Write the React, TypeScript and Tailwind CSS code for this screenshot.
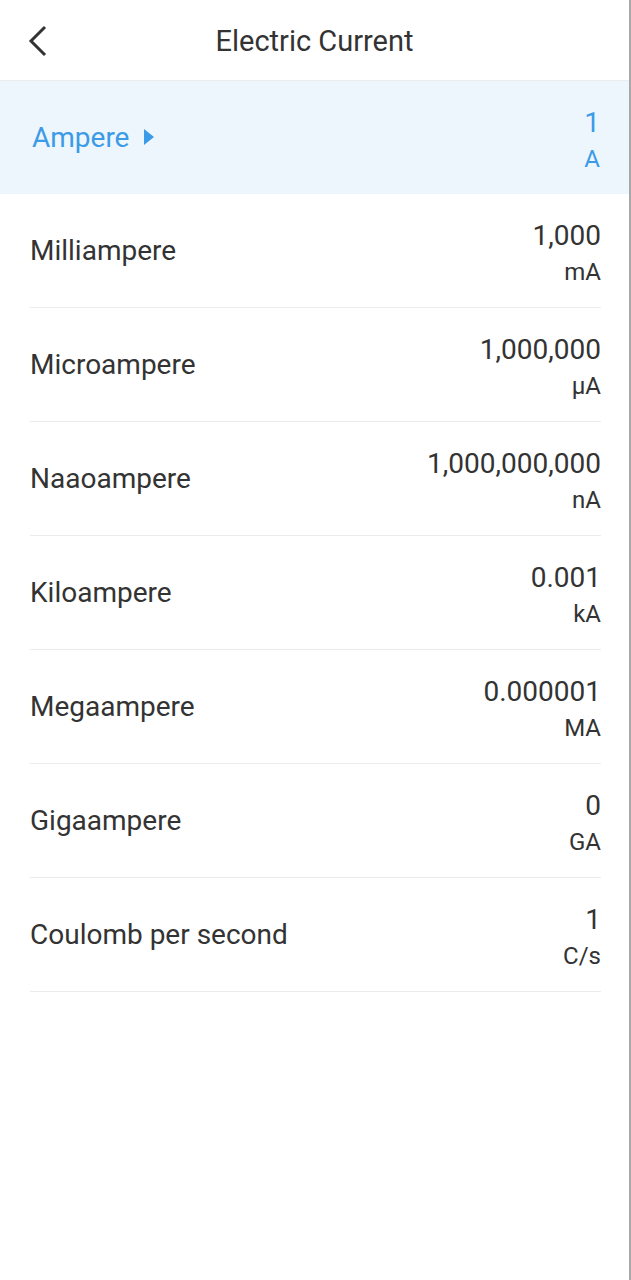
const units = [
  { name: 'Milliampere', value: '1,000', symbol: 'mA' },
  { name: 'Microampere', value: '1,000,000', symbol: 'µA' },
  { name: 'Naaoampere', value: '1,000,000,000', symbol: 'nA' },
  { name: 'Kiloampere', value: '0.001', symbol: 'kA' },
  { name: 'Megaampere', value: '0.000001', symbol: 'MA' },
  { name: 'Gigaampere', value: '0', symbol: 'GA' },
  { name: 'Coulomb per second', value: '1', symbol: 'C/s' },
];

export default function App() {
  return (
    <div
      className="w-[631px] min-h-[1280px] bg-white border-r-2 border-[#a8a8a8] text-[#333333]"
      style={{ fontFamily: 'Roboto, "Noto Sans", sans-serif' }}
    >
      {/* Header */}
      <div className="relative h-[81px] flex items-center justify-center border-b border-[#ececec]">
        <button className="absolute left-[28px] top-[25px]">
          <svg width="20" height="32" viewBox="0 0 20 32">
            <path d="M17 2 L3 16 L17 30" fill="none" stroke="#333" strokeWidth="3" />
          </svg>
        </button>
        <h1 className="text-[29px] leading-none mt-[2px]">Electric Current</h1>
      </div>

      {/* Selected unit */}
      <div className="h-[113px] bg-[#edf6fd] flex items-center justify-between pl-[32px] pr-[29px] text-[#3b9be6]">
        <div className="flex items-center gap-[14px]">
          <span className="text-[28px]">Ampere</span>
          <svg width="12" height="18" viewBox="0 0 12 18" className="mt-[-2px]">
            <path d="M1 1 L11 9 L1 17 Z" fill="#3b9be6" />
          </svg>
        </div>
        <div className="flex flex-col items-end text-[28px] leading-[36px] mt-[6px]">
          <span>1</span>
          <span className="text-[24px]">A</span>
        </div>
      </div>

      {/* Other units */}
      <div className="pl-[30px] pr-[28px]">
        {units.map(u => (
          <div
            key={u.name}
            className="h-[114px] flex items-center justify-between border-b border-[#ececec]"
          >
            <span className="text-[28px]">{u.name}</span>
            <div className="flex flex-col items-end text-[28px] leading-[36px] mt-[6px]">
              <span>{u.value}</span>
              <span className="text-[24px]">{u.symbol}</span>
            </div>
          </div>
        ))}
      </div>
    </div>
  );
}
